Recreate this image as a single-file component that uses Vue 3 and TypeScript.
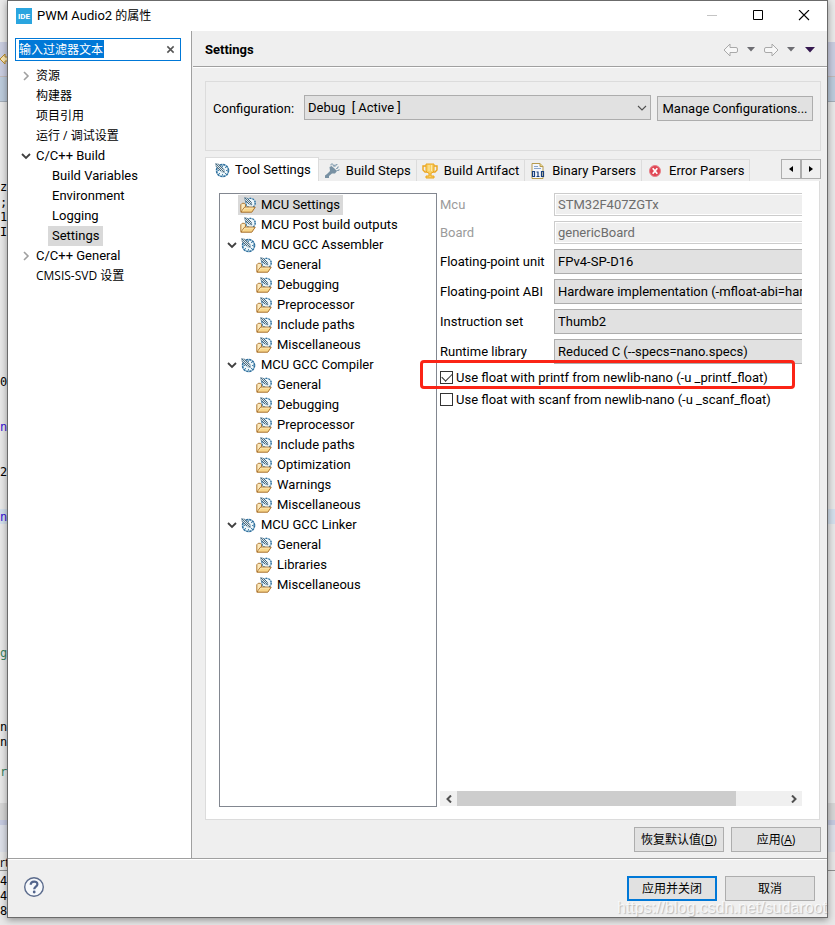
<script setup lang="ts">
import { ref } from 'vue'

interface NavItem { label: string; level: number; state?: 'open' | 'closed'; selected?: boolean; cjk?: boolean }
interface ToolItem { label: string; kind: 'folder' | 'gauge'; level: number; open?: boolean; selected?: boolean }
interface Glyph { text: string; top: number; tone: string }

const navItems: NavItem[] = [
  { label: '资源', level: 0, state: 'closed', cjk: true },
  { label: '构建器', level: 0, cjk: true },
  { label: '项目引用', level: 0, cjk: true },
  { label: '运行 / 调试设置', level: 0, cjk: true },
  { label: 'C/C++ Build', level: 0, state: 'open' },
  { label: 'Build Variables', level: 1 },
  { label: 'Environment', level: 1 },
  { label: 'Logging', level: 1 },
  { label: 'Settings', level: 1, selected: true },
  { label: 'C/C++ General', level: 0, state: 'closed' },
  { label: 'CMSIS-SVD 设置', level: 0, cjk: true },
]

const leaf = (label: string): ToolItem => ({ label, kind: 'folder', level: 1 })
const branch = (label: string): ToolItem => ({ label, kind: 'gauge', level: 0, open: true })

const toolItems: ToolItem[] = [
  { label: 'MCU Settings', kind: 'folder', level: 0, selected: true },
  { label: 'MCU Post build outputs', kind: 'folder', level: 0 },
  branch('MCU GCC Assembler'),
  ...['General', 'Debugging', 'Preprocessor', 'Include paths', 'Miscellaneous'].map(leaf),
  branch('MCU GCC Compiler'),
  ...['General', 'Debugging', 'Preprocessor', 'Include paths', 'Optimization', 'Warnings', 'Miscellaneous'].map(leaf),
  branch('MCU GCC Linker'),
  ...['General', 'Libraries', 'Miscellaneous'].map(leaf),
]

const tabs = [
  { id: 'tool', label: 'Tool Settings' },
  { id: 'steps', label: 'Build Steps' },
  { id: 'artifact', label: 'Build Artifact' },
  { id: 'binary', label: 'Binary Parsers' },
  { id: 'error', label: 'Error Parsers' },
]
const activeTab = ref('tool')

const texts = [
  { id: 'mcu', label: 'Mcu', value: 'STM32F407ZGTx' },
  { id: 'board', label: 'Board', value: 'genericBoard' },
]
const selects = [
  { id: 'fpu', label: 'Floating-point unit', value: 'FPv4-SP-D16' },
  { id: 'abi', label: 'Floating-point ABI', value: 'Hardware implementation (-mfloat-abi=hard)' },
  { id: 'iset', label: 'Instruction set', value: 'Thumb2' },
  { id: 'rtlib', label: 'Runtime library', value: 'Reduced C (--specs=nano.specs)' },
]
const printfFloat = ref(true)
const scanfFloat = ref(false)
const filter = ref('')

const glyphs: Glyph[] = [
  { text: 'z', top: 180, tone: 'ink' },
  { text: ';', top: 195, tone: 'ink' },
  { text: '1', top: 210, tone: 'ink' },
  { text: 'I', top: 225, tone: 'ink' },
  { text: '0', top: 375, tone: 'ink' },
  { text: 'n', top: 420, tone: 'violet' },
  { text: '2', top: 465, tone: 'ink' },
  { text: 'n', top: 510, tone: 'violet' },
  { text: 'g', top: 646, tone: 'green' },
  { text: 'n', top: 720, tone: 'ink' },
  { text: 'n', top: 735, tone: 'ink' },
  { text: 'r', top: 765, tone: 'green' },
  { text: 'rte', top: 856, tone: 'ink narrow' },
  { text: '4', top: 874, tone: 'ink' },
  { text: '4', top: 889, tone: 'ink' },
  { text: '80', top: 904, tone: 'ink' },
]
</script>

<template>
  <div class="desktop">
    <svg class="defs" width="0" height="0" aria-hidden="true">
      <symbol id="gauge" viewBox="0 0 16 16">
        <circle cx="8.500" cy="8.500" r="6" fill="#eef7fb" stroke="#9dbfd3" stroke-width="1.500" />
        <circle cx="8.500" cy="8.500" r="6" fill="none" stroke="#2f6f9e" stroke-width="1.500" stroke-dasharray="2 1.140" />
        <path d="M8.500 3.500v1.500M8.500 12v1.500M3.500 8.500H5M12 8.500h1.500M5 12l1-1M12 5l-1 1M12 12l-1-1" stroke="#4584ad" />
        <path d="M1.500 1.500L5 2.300l5 5.200.5 3-3-.8L2.300 5z" fill="#dfe9ee" stroke="#54778d" stroke-width=".6" />
        <path d="M2 2l8 8M2.500 4.500l4.500 4.500M4.500 2.500L9.500 7.500" stroke="#2b5168" stroke-width=".8" />
      </symbol>
      <symbol id="folder-gauge" viewBox="0 0 16 16">
        <circle cx="10.500" cy="6" r="4.700" fill="#eef7fb" stroke="#9dbfd3" stroke-width="1.300" />
        <circle cx="10.500" cy="6" r="4.700" fill="none" stroke="#2f6f9e" stroke-width="1.300" stroke-dasharray="1.600 1.350" />
        <path d="M4.500.5l2.700.7 4.200 4.300.5 2.500-2.600-.6L5 3.500z" fill="#dfe9ee" stroke="#54778d" stroke-width=".6" />
        <path d="M5 1l6.500 6.500M5.500 3.500L9 7M7.500 1.500L11.500 5.500" stroke="#2b5168" stroke-width=".8" />
        <path d="M.8 14.800V7.700L2.200 6.300h2.300l1 1.400v2.600h6" fill="#fbe9bd" stroke="#b07a35" />
        <path d="M.9 15.200l3.700-5h10.600L11.800 15.200z" fill="#f8d58a" stroke="#a8702c" />
        <path d="M2.700 14l2.300-3h8.700" fill="none" stroke="#fff0c4" stroke-width=".8" />
      </symbol>
      <symbol id="chev-down" viewBox="0 0 10 10">
        <path d="M1 3l4 4 4-4" fill="none" stroke="#404040" stroke-width="1.800" />
      </symbol>
      <symbol id="chev-right" viewBox="0 0 10 10">
        <path d="M3 1l4 4-4 4" fill="none" stroke="#a0a0a0" stroke-width="1.600" />
      </symbol>
      <symbol id="arrow" viewBox="0 0 16 14">
        <path d="M1 7l6-6v3.500h6q1.500 0 1.500 1.500v2q0 1.500-1.500 1.500H7V13z" fill="#f7f7f7" stroke="#a9a9a9" />
      </symbol>
    </svg>

    <div class="backdrop" aria-hidden="true">
      <span v-for="(g, i) in glyphs" :key="i" class="glyph" :class="g.tone" :style="{ top: g.top + 'px' }">{{ g.text }}</span>
      <svg class="back-arrow" viewBox="0 0 8 14"><path d="M0 7l5-5v3h3v4H5v3z" fill="#fbe7b2" stroke="#b98a28" /></svg>
    </div>

    <section class="dialog" role="dialog" aria-labelledby="dialog-title">
      <header class="titlebar">
        <svg class="logo" viewBox="0 0 16 16" aria-hidden="true">
          <rect width="16" height="16" fill="#2aa5df" />
          <text x="8" y="11" text-anchor="middle" fill="#fff" font-size="8" font-weight="700">IDE</text>
        </svg>
        <h1 id="dialog-title">PWM Audio2 <span class="cjk">的属性</span></h1>
        <div class="win-controls">
          <button type="button" aria-label="Minimize" disabled><svg viewBox="0 0 12 12"><path d="M1 5.500h10" stroke="#c4c4c4" /></svg></button>
          <button type="button" aria-label="Maximize"><svg viewBox="0 0 12 12"><path d="M1.500 .500h9v9h-9z" fill="none" stroke="#000" /></svg></button>
          <button type="button" aria-label="Close"><svg viewBox="0 0 12 12"><path d="M1 0l10 10M11 0L1 10" stroke="#000" stroke-width="1.100" /></svg></button>
        </div>
      </header>

      <div class="body">
        <nav class="sidebar">
          <div class="filter">
            <input v-model="filter" class="cjk" type="text" placeholder="输入过滤器文本" aria-label="输入过滤器文本" />
            <button type="button" aria-label="Clear"><svg viewBox="0 0 10 10"><path d="M1.500 1.500l7 7M8.500 1.500l-7 7" stroke="#555" stroke-width="1.700" /></svg></button>
          </div>
          <ul class="nav-tree">
            <li v-for="item in navItems" :key="item.label" :class="'nav-' + item.level">
              <svg v-if="item.state" class="chev" aria-hidden="true"><use :href="item.state === 'open' ? '#chev-down' : '#chev-right'" /></svg>
              <span v-else class="chev"></span>
              <button type="button" :class="{ cjk: item.cjk, selected: item.selected }">{{ item.label }}</button>
            </li>
          </ul>
        </nav>

        <main class="page">
          <header class="page-head">
            <h2>Settings</h2>
            <div class="history">
              <button type="button" aria-label="Back"><svg class="arrow"><use href="#arrow" /></svg></button>
              <button type="button" aria-label="Back history"><svg class="tri" viewBox="0 0 8 5"><path d="M0 0h8L4 4.500z" fill="#6d6d72" /></svg></button>
              <button type="button" aria-label="Forward"><svg class="arrow flip"><use href="#arrow" /></svg></button>
              <button type="button" aria-label="Forward history"><svg class="tri" viewBox="0 0 8 5"><path d="M0 0h8L4 4.500z" fill="#6d6d72" /></svg></button>
              <button type="button" aria-label="Menu"><svg class="menu" viewBox="0 0 10 6"><path d="M0 0h10L5 5.500z" fill="#35184f" /></svg></button>
            </div>
          </header>

          <div class="content">
            <div class="config">
              <label for="configuration">Configuration:</label>
              <div class="picker">
                <select id="configuration"><option>Debug&nbsp; [ Active ]</option></select>
                <svg viewBox="0 0 10 10" aria-hidden="true"><path d="M1 3l4 4 4-4" fill="none" stroke="#505050" stroke-width="1.100" /></svg>
              </div>
              <button type="button" class="btn">Manage Configurations...</button>
            </div>

            <div class="tabbar">
              <div class="tabs" role="tablist">
                <button v-for="tab in tabs" :key="tab.id" type="button" role="tab" class="tab" :class="{ active: activeTab === tab.id }" :aria-selected="activeTab === tab.id" @click="activeTab = tab.id">
                  <svg v-if="tab.id === 'tool'" class="icon"><use href="#gauge" /></svg>
                  <svg v-else-if="tab.id === 'steps'" class="icon" viewBox="0 0 16 16">
                    <path d="M1 12.500L3 11l3-3-.5-4L7.500 3l3 2.500L13 8l-2 2.500H8L5 13v2H1z" fill="#7891a3" />
                    <path d="M7 2.500V1h2v1.500h2V1.500M10 4V3h2V1.500h1.500M12 5.500h1.500V4H15M12.500 7.500H15V6" fill="none" stroke="#8ca4b5" />
                  </svg>
                  <svg v-else-if="tab.id === 'artifact'" class="icon" viewBox="0 0 16 16">
                    <path d="M4 3H1v4l2 2h2M12 3h3v4l-2 2h-2" fill="none" stroke="#eba51d" stroke-width="1.400" />
                    <path d="M4 1h8v7l-2 2H9v3h3v2H4v-2h3v-3H6L4 8z" fill="#f8cf63" stroke="#eba51d" />
                    <path d="M7 2v6M9.500 2v6" stroke="#fde9a9" />
                  </svg>
                  <svg v-else-if="tab.id === 'binary'" class="icon" viewBox="0 0 16 16">
                    <path d="M2 15.500V.5h8l3 3v12z" fill="#f4f7fc" stroke="#b69a4d" />
                    <path d="M10 .5v3h3" fill="#ecd88f" stroke="#b69a4d" />
                    <path d="M4 3.500h4M4 5.500h7" stroke="#8aa6cc" />
                    <path d="M2.500 8.500h2v5h-2zM11.500 8.500h2v5h-2zM6.500 9h1.500v4.500M6.500 13.500h3" fill="none" stroke="#183f7c" stroke-width="1.200" />
                  </svg>
                  <svg v-else class="icon" viewBox="0 0 16 16">
                    <circle cx="8" cy="8" r="5.500" fill="#e04553" stroke="#e8828a" />
                    <path d="M5.700 5.200l4.600 5.600M10.300 5.200l-4.600 5.600" stroke="#fff" stroke-width="1.700" />
                  </svg>
                  <span>{{ tab.label }}</span>
                </button>
              </div>
              <div class="tab-scroll">
                <button type="button" aria-label="Previous tabs"><svg viewBox="0 0 4 6"><path d="M4 0v6L0 3z" /></svg></button>
                <button type="button" aria-label="Next tabs"><svg viewBox="0 0 4 6"><path d="M0 0v6l4-3z" /></svg></button>
              </div>
            </div>

            <div class="panel" role="tabpanel">
              <ul class="tool-tree">
                <li v-for="(item, i) in toolItems" :key="i" :class="'tool-' + item.level">
                  <svg v-if="item.open" class="chev" aria-hidden="true"><use href="#chev-down" /></svg>
                  <span v-else class="chev"></span>
                  <button type="button" :class="{ selected: item.selected }">
                    <svg class="icon" aria-hidden="true"><use :href="item.kind === 'gauge' ? '#gauge' : '#folder-gauge'" /></svg>
                    <span>{{ item.label }}</span>
                  </button>
                </li>
              </ul>

              <div class="options">
                <div class="fields">
                  <div v-for="f in texts" :key="f.id" class="field text-field">
                    <label :for="f.id">{{ f.label }}</label>
                    <input :id="f.id" type="text" :value="f.value" disabled />
                  </div>
                  <div v-for="f in selects" :key="f.id" class="field">
                    <label :for="f.id">{{ f.label }}</label>
                    <select :id="f.id"><option>{{ f.value }}</option></select>
                  </div>
                </div>
                <label class="check marked"><input v-model="printfFloat" type="checkbox" /><span>Use float with printf from newlib-nano (-u _printf_float)</span></label>
                <label class="check"><input v-model="scanfFloat" type="checkbox" /><span>Use float with scanf from newlib-nano (-u _scanf_float)</span></label>
                <div class="scrollbar">
                  <button type="button" aria-label="Scroll left"><svg viewBox="0 0 8 8"><path d="M6 0.500L2.500 4 6 7.500" /></svg></button>
                  <div class="track"><div class="thumb"></div></div>
                  <button type="button" aria-label="Scroll right"><svg viewBox="0 0 8 8"><path d="M2 0.500L5.500 4 2 7.500" /></svg></button>
                </div>
              </div>
            </div>

            <div class="page-actions">
              <button type="button" class="btn cjk">恢复默认值(<u>D</u>)</button>
              <button type="button" class="btn cjk">应用(<u>A</u>)</button>
            </div>
          </div>
        </main>
      </div>

      <footer class="footer">
        <button type="button" class="help" aria-label="Help">
          <svg viewBox="0 0 22 22"><circle cx="11" cy="11" r="9.300" fill="#f6f8fb" stroke="#5b6b8c" stroke-width="1.400" /><path d="M7.700 8.800c0-4.300 6.800-4.200 6.700-.6 0 2.300-3.200 2.500-3.200 5" fill="none" stroke="#53658c" stroke-width="2.200" /><circle cx="11.200" cy="16" r="1.400" fill="#53658c" /></svg>
        </button>
        <div class="footer-actions">
          <button type="button" class="btn cjk primary">应用并关闭</button>
          <button type="button" class="btn cjk">取消</button>
        </div>
      </footer>
    </section>
    <div class="watermark">https://blog.csdn.net/sudaroot</div>
  </div>
</template>

<style>
body { margin: 0; }
</style>

<style scoped>
* { box-sizing: border-box; }
.desktop {
  position: relative;
  display: flex;
  min-height: 100vh;
  padding: 0 7px 7px;
  overflow: hidden;
  font-family: Roboto, "Noto Sans CJK SC", sans-serif;
  font-size: 13px;
  line-height: 20px;
  color: #000;
  background: #e8e8e8;
}
.cjk { font-size: 12px; font-family: "Open Sans", "Noto Sans CJK SC", sans-serif; }
button, input, select { font: inherit; color: inherit; margin: 0; }
button { border: 0; padding: 0; background: none; white-space: nowrap; }
button.cjk, input.cjk { font-size: 12px; font-family: "Open Sans", "Noto Sans CJK SC", sans-serif; }
ul { list-style: none; margin: 0; padding: 0; }
h1, h2 { margin: 0; font-size: 13px; font-weight: 400; }
svg { display: block; flex: none; }
.defs { position: absolute; }
.icon { width: 16px; height: 16px; }

.backdrop {
  position: absolute;
  inset: 0;
  background: linear-gradient(#e9e9e9 42px, #c9cde0 42px 76px, #c2b9b8 76px 77px, #bccbdc 77px 101px, #a3adb8 101px 102px, #e8e8e8 102px 509px, #d3dfec 509px 524px, #e8e8e8 524px 803px, #d6d6d6 803px 820px, #c5cae0 820px 825px, #dcdfe8 825px 852px, #e6e6e6 852px 870px, #909090 870px 871px, #e8e8e8 871px);
}
.glyph { position: absolute; left: 0; font: 12px/14px "DejaVu Sans Mono", monospace; }
.glyph.narrow { font-family: "Open Sans", sans-serif; }
.ink { color: #000; }
.violet { color: #3912d4; }
.green { color: #39805c; }
.back-arrow { position: absolute; left: 0; top: 52px; width: 8px; height: 14px; }

.dialog {
  position: relative;
  flex: 1;
  min-width: 0;
  display: flex;
  flex-direction: column;
  border: 1px solid #6b6b6b;
  background: #efefef;
  box-shadow: 0 2px 7px rgba(0, 0, 0, .38);
}
.titlebar { display: flex; align-items: center; height: 30px; padding: 0 17px 0 8px; gap: 5px; background: #fff; }
.logo { width: 16px; height: 16px; }
.win-controls { display: flex; gap: 34px; margin-left: auto; }
.win-controls svg { width: 12px; height: 12px; }

.body { flex: 1; display: flex; min-height: 0; border-bottom: 1px solid #a0a0a0; }
.sidebar { flex: none; width: 184px; padding: 7px 10px 0 7px; border-right: 1px solid #a0a0a0; background: #fff; }
.filter { display: flex; align-items: center; height: 23px; padding: 0 5px 0 3px; border: 1px solid #0078d7; }
.filter input { flex: 1; min-width: 0; height: 19px; padding: 0; border: 0; outline: 0; background: none; }
.filter input::placeholder { color: #fff; opacity: 1; background: linear-gradient(90deg, #0078d7 85px, transparent 85px); }
.filter svg { width: 9px; height: 9px; }
.nav-tree { padding-top: 5px; }
.nav-tree li { display: flex; align-items: center; height: 20px; }
.nav-0 { padding-left: 6px; }
.nav-1 { padding-left: 22px; }
.chev { flex: none; width: 10px; height: 10px; }
.nav-tree button { height: 20px; padding: 0 4px; margin-left: 1px; line-height: 20px; }
.nav-tree .cjk { padding-bottom: 1px; line-height: 18px; }
.selected { background: #d9d9d9; }

.page { flex: 1; min-width: 0; display: flex; flex-direction: column; margin-left: 1px; }
.page-head { display: flex; align-items: center; justify-content: space-between; height: 36px; padding: 2px 12px 0; border-bottom: 1px solid #a0a0a0; box-shadow: 0 1px #fff; }
.page-head h2 { padding-top: 1px; font-weight: 700; }
.history { display: flex; align-items: center; gap: 8px; }
.arrow { width: 16px; height: 14px; }
.flip { transform: scaleX(-1); }
.tri { width: 8px; height: 5px; }
.menu { width: 10px; height: 6px; margin-left: 2px; }

.content { flex: 1; display: flex; flex-direction: column; min-height: 0; padding: 14px 6px 6px 12px; }
.config { display: flex; align-items: flex-start; height: 70px; padding: 13px 7px; gap: 6px; border: 1px solid #dcdcdc; }
.config label { width: 85px; padding-top: 4px; white-space: nowrap; }
.picker { flex: 1; min-width: 0; position: relative; }
.picker svg { position: absolute; right: 4px; top: 8px; width: 10px; height: 10px; }
select { display: block; width: 100%; height: 25px; padding: 1px 3px 0; border: 1px solid #adadad; border-radius: 0; background: #e1e1e1; appearance: none; }
.btn { width: 90px; height: 25px; border: 1px solid #adadad; background: #e1e1e1; }
.config .btn { width: 156px; margin-top: 1px; }
.btn.primary { border: 2px solid #0078d7; }

.tabbar { display: flex; justify-content: space-between; height: 24px; margin-top: 6px; }
.tabs { display: flex; align-items: flex-end; flex: 1; }
.tab { display: flex; align-items: center; gap: 6px; height: 22px; padding: 0 5px; border: 1px solid #dcdcdc; border-left: 0; border-bottom: 0; }
.tab.active { gap: 5px; height: 24px; padding: 0 7px 0 8px; border-left: 1px solid #dcdcdc; background: #fff; }
.tab-scroll { display: flex; }
.tab-scroll button { display: grid; place-items: center; width: 20px; height: 20px; margin-top: 2px; border: 1px solid #adadad; }
.tab-scroll svg { width: 4px; height: 6px; }

.panel { flex: 1; display: flex; gap: 3px; min-height: 0; margin-right: 1px; padding: 12px 17px 12px 13px; border: 1px solid #dcdcdc; border-top: 0; background: #fff; }
.tool-tree { flex: none; width: 218px; padding: 1px 7px; border: 1px solid #828790; }
.tool-tree li { display: flex; align-items: center; height: 20px; }
.tool-1 { padding-left: 16px; }
.tool-tree button { display: flex; align-items: center; gap: 5px; height: 20px; padding: 0 3px 0 2px; margin-left: 1px; }

.options { flex: 1; min-width: 0; display: flex; flex-direction: column; }
.fields { display: grid; gap: 5px; overflow: hidden; }
.field { display: grid; grid-template-columns: 114px 460px; height: 25px; align-items: center; white-space: nowrap; }
.field label { padding-top: 1px; }
.text-field { height: 23px; color: #9b9b9b; }
.text-field input { height: 23px; padding: 0 3px; border: 1px solid #ccc; background: #efefef; box-shadow: inset 0 0 0 1px #fff; color: #6d6d6d; }
.check { position: relative; display: flex; align-items: center; gap: 3px; height: 22px; white-space: nowrap; }
.check span { padding-top: 2px; }
.marked { margin-top: 2px; }
.marked::after { content: ""; position: absolute; inset: -6px 7px -1px -20px; border: 3px solid #fb2416; border-radius: 4px; }
.check input { flex: none; width: 13px; height: 13px; appearance: none; border: 1px solid #333; background: #fff; display: grid; place-items: center; }
.check input:checked::before { content: ""; width: 9px; height: 5px; margin-bottom: 3px; border: solid #333; border-width: 0 0 1px 1px; transform: rotate(-45deg); }
.scrollbar { display: flex; height: 15px; margin-top: auto; margin-bottom: 1px; background: #f0f0f0; }
.scrollbar button { display: grid; place-items: center; width: 17px; }
.scrollbar svg { width: 8px; height: 8px; fill: none; stroke: #505050; stroke-width: 2; }
.track { flex: 1; }
.thumb { width: 85%; height: 15px; background: #cdcdcd; }
.page-actions { display: flex; justify-content: flex-end; gap: 7px; margin-top: 7px; }

.footer { display: flex; align-items: center; justify-content: space-between; height: 58px; padding: 0 12px 0 15px; border-top: 1px solid #fff; }
.help { padding-bottom: 3px; }
.help svg { width: 22px; height: 22px; }
.footer-actions { display: flex; gap: 8px; }
.watermark { position: absolute; right: 8px; bottom: 7px; font: 16px/20px "Liberation Sans", sans-serif; color: rgba(255, 255, 255, .75); text-shadow: 1px 1px 1px rgba(120, 120, 120, .45); pointer-events: none; }
</style>
